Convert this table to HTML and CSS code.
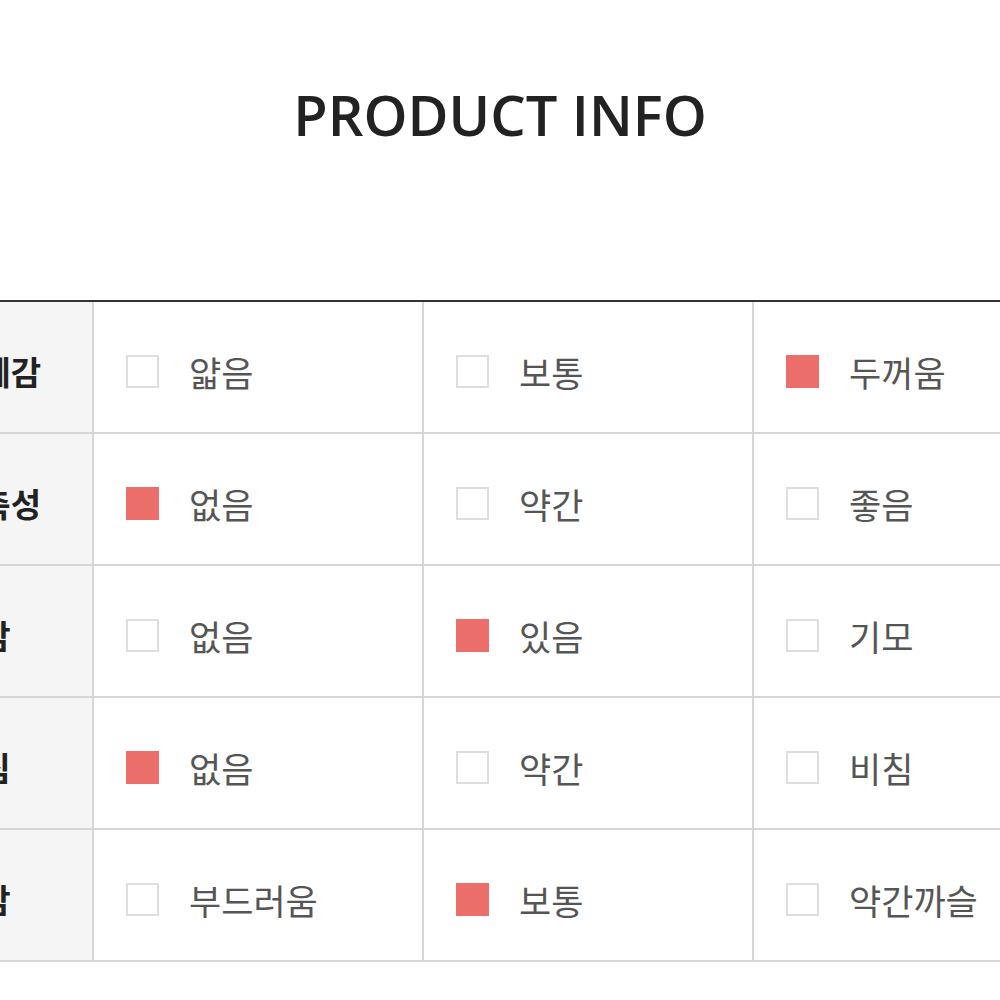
FILE: index.html
```html
<!DOCTYPE html>
<html lang="ko">
<head>
<meta charset="utf-8">
<title>Product Info</title>
<link rel="stylesheet" href="styles.css">
</head>
<body>
<div class="page">
  <h1 class="title">PRODUCT INFO</h1>
  <div class="info-table">
    <div class="row">
      <div class="label">두께감</div>
      <div class="cell"><span class="box"></span><span class="txt">얇음</span></div>
      <div class="cell"><span class="box"></span><span class="txt">보통</span></div>
      <div class="cell"><span class="box on"></span><span class="txt">두꺼움</span></div>
    </div>
    <div class="row">
      <div class="label">신축성</div>
      <div class="cell"><span class="box on"></span><span class="txt">없음</span></div>
      <div class="cell"><span class="box"></span><span class="txt">약간</span></div>
      <div class="cell"><span class="box"></span><span class="txt">좋음</span></div>
    </div>
    <div class="row">
      <div class="label">안감</div>
      <div class="cell"><span class="box"></span><span class="txt">없음</span></div>
      <div class="cell"><span class="box on"></span><span class="txt">있음</span></div>
      <div class="cell"><span class="box"></span><span class="txt">기모</span></div>
    </div>
    <div class="row">
      <div class="label">비침</div>
      <div class="cell"><span class="box on"></span><span class="txt">없음</span></div>
      <div class="cell"><span class="box"></span><span class="txt">약간</span></div>
      <div class="cell"><span class="box"></span><span class="txt">비침</span></div>
    </div>
    <div class="row">
      <div class="label">촉감</div>
      <div class="cell"><span class="box"></span><span class="txt">부드러움</span></div>
      <div class="cell"><span class="box on"></span><span class="txt">보통</span></div>
      <div class="cell"><span class="box"></span><span class="txt">약간까슬</span></div>
    </div>
  </div>
</div>
</body>
</html>
```

FILE: styles.css
```css
html, body {
  margin: 0;
  padding: 0;
  background: #fff;
  overflow: hidden;
}

.page {
  width: 1000px;
  height: 1000px;
  overflow: hidden;
  font-family: "Noto Sans CJK KR", "Noto Sans", sans-serif;
}

.title {
  margin: 0;
  padding-top: 82px;
  height: 300px;
  box-sizing: border-box;
  text-align: center;
  font-family: "Open Sans", "Noto Sans", sans-serif;
  font-weight: 600;
  font-size: 56px;
  line-height: 64px;
  color: #222;
}

.info-table {
  margin-left: -55px;
  width: 1200px;
  border-top: 2px solid #333;
}

.row {
  display: grid;
  grid-template-columns: 149px 330px 330px 330px;
  height: 132px;
}

.label,
.cell {
  box-sizing: border-box;
  border-right: 2px solid #d6d6d6;
  border-bottom: 2px solid #d6d6d6;
  display: flex;
  align-items: center;
  padding-top: 8px;
}

.label {
  padding-left: 5px;
  background: #f5f5f5;
  font-weight: 700;
  font-size: 33px;
  color: #222;
}

.cell {
  padding-left: 32px;
  gap: 30px;
  font-size: 35px;
  color: #555;
  font-weight: 400;
}

.box {
  width: 33px;
  height: 33px;
  box-sizing: border-box;
  border: 2px solid #dedede;
  background: #fff;
  flex: none;
}

.box.on {
  border: none;
  background: #ec6e6a;
}
```
